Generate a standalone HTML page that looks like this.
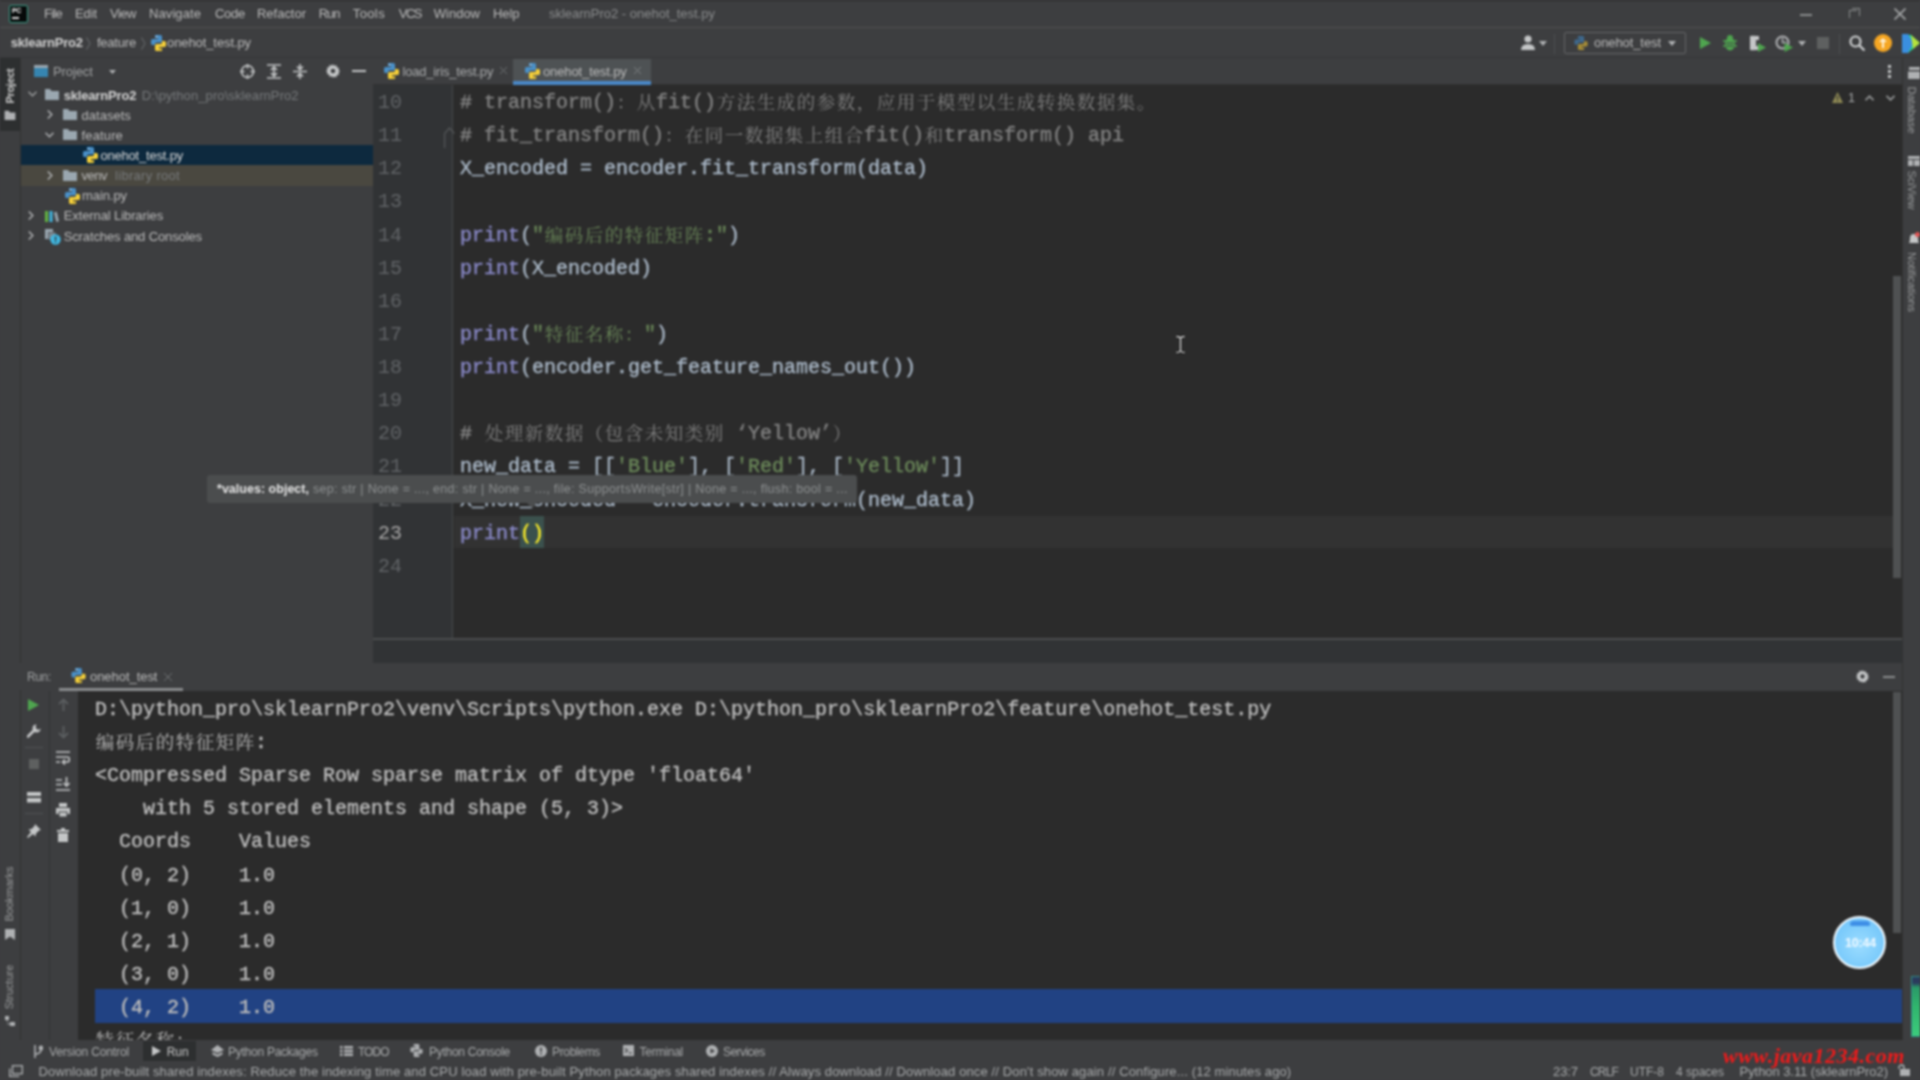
<!DOCTYPE html>
<html lang="zh">
<head>
<meta charset="utf-8">
<title>sklearnPro2 - onehot_test.py</title>
<style>
*{box-sizing:border-box;margin:0;padding:0}
html,body{width:1920px;height:1080px;overflow:hidden;background:#3d3e40}
body{filter:blur(.8px);position:relative;font-family:"Liberation Sans","Noto Sans CJK SC",sans-serif;font-size:13px;color:#bbbbbb}
.abs{position:absolute}
.t{position:absolute;white-space:pre;line-height:1;z-index:5}
.mono{font-family:"Liberation Mono","Noto Serif CJK SC",monospace;font-size:20px;-webkit-text-stroke:.4px currentColor}
.k{position:relative;top:1px;font-size:18.500px;letter-spacing:1.500px;margin-left:.7px;margin-right:-.7px;-webkit-text-stroke:0}
/* ---------- top ---------- */
#menubar{left:0;top:0;width:1920px;height:28px;background:#3d3e40;border-top:1px solid #2b2b2b;border-bottom:1px solid #515151}
#navbar{left:0;top:29px;width:1920px;height:29px;background:#3d3e40;border-bottom:1px solid #353638}
.menu{top:7px;font-size:13px;color:#bbbbbb}
.nav{top:36px;font-size:13px;color:#bbbbbb}
/* ---------- left ---------- */
#lstrip{left:0;top:58px;width:21px;height:982px;background:#3d3e40;border-right:1px solid #323232}
#proj{left:21px;top:58px;width:352px;height:600px;background:#3d3e40}
.tree{font-size:12.5px;color:#bbbbbb}
/* ---------- editor ---------- */
#tabs{left:373px;top:58px;width:1529px;height:27px;background:#3d3e40;border-bottom:1px solid #323232}
#editor{left:373px;top:85px;width:1529px;height:553px;background:#2b2b2b}
#gutter{left:373px;top:85px;width:80px;height:553px;background:#313335;border-right:1px solid #474a4b}
.ln{position:absolute;left:378px;width:40px;color:#606366;white-space:pre;line-height:1;-webkit-text-stroke:0 !important}
.code{position:absolute;left:460px;white-space:pre;line-height:1;color:#a9b7c6}
.c{color:#808080}.s{color:#6a8759}.b{color:#8888c6}
/* ---------- run ---------- */
#runhead{left:0;top:663px;width:1920px;height:27px;background:#3d3e40}
#console{left:78px;top:691px;width:1824px;height:349px;background:#2b2b2b;overflow:hidden}
.out{position:absolute;left:95px;white-space:pre;line-height:1;color:#bbbbbb}
/* ---------- bottom ---------- */
#toolbar{z-index:3;left:0;top:1040px;width:1920px;height:22px;background:#3d3e40}
#status{z-index:3;left:0;top:1062px;width:1920px;height:18px;background:#3d3e40}
#rstrip{left:1902px;top:58px;width:18px;height:982px;background:#3d3e40;border-left:1px solid #323232}
</style>
</head>
<body>
<div id="menubar" class="abs"></div>
<div id="navbar" class="abs"></div>
<div id="lstrip" class="abs"></div>
<div id="proj" class="abs"></div>
<div id="tabs" class="abs"></div>
<div id="editor" class="abs"></div>
<div id="gutter" class="abs"></div>
<div class="abs" style="left:454px;top:516px;width:1439px;height:32px;background:#323232"></div>
<div class="abs" style="left:520px;top:516px;width:24px;height:32px;background:#3b514d"></div>
<div id="runhead" class="abs"></div>
<div id="console" class="abs"></div>
<div id="toolbar" class="abs"></div>
<div id="status" class="abs"></div>
<div id="rstrip" class="abs"></div>
<!--MENU-->
<div class="t" style="left:44.0px;top:7.3px;font-size:13px;color:#bbbbbb;letter-spacing:-0.74px;">File</div>
<div class="t" style="left:75.0px;top:7.3px;font-size:13px;color:#bbbbbb;letter-spacing:-0.10px;">Edit</div>
<div class="t" style="left:110.0px;top:7.3px;font-size:13px;color:#bbbbbb;letter-spacing:-0.49px;">View</div>
<div class="t" style="left:149.0px;top:7.3px;font-size:13px;color:#bbbbbb;letter-spacing:0.09px;">Navigate</div>
<div class="t" style="left:215.0px;top:7.3px;font-size:13px;color:#bbbbbb;letter-spacing:-0.27px;">Code</div>
<div class="t" style="left:257.0px;top:7.3px;font-size:13px;color:#bbbbbb;letter-spacing:-0.02px;">Refactor</div>
<div class="t" style="left:318.7px;top:7.3px;font-size:13px;color:#bbbbbb;letter-spacing:-0.99px;">Run</div>
<div class="t" style="left:352.8px;top:7.3px;font-size:13px;color:#bbbbbb;letter-spacing:0.37px;">Tools</div>
<div class="t" style="left:398.8px;top:7.3px;font-size:13px;color:#bbbbbb;letter-spacing:-1.51px;">VCS</div>
<div class="t" style="left:433.8px;top:7.3px;font-size:13px;color:#bbbbbb;letter-spacing:-0.01px;">Window</div>
<div class="t" style="left:493.0px;top:7.3px;font-size:13px;color:#bbbbbb;letter-spacing:-0.09px;">Help</div>
<div class="t" style="left:549.0px;top:7.3px;font-size:13px;color:#8a8c8d;letter-spacing:-0.01px;">sklearnPro2 - onehot_test.py</div>
<div class="t" style="left:10.8px;top:36.4px;font-size:13px;color:#d0d0d0;letter-spacing:-0.23px;font-weight:bold">sklearnPro2</div>
<div class="t" style="left:96.9px;top:36.4px;font-size:13px;color:#bbbbbb;letter-spacing:-0.20px;">feature</div>
<div class="t" style="left:167.0px;top:36.4px;font-size:13px;color:#bbbbbb;letter-spacing:-0.09px;">onehot_test.py</div>
<div class="t" style="left:1594.0px;top:36.4px;font-size:13px;color:#bbbbbb;letter-spacing:-0.09px;">onehot_test</div>
<div class="t" style="left:53.0px;top:65.0px;font-size:13px;color:#a0a2a3;letter-spacing:-0.11px;">Project</div>
<div class="t" style="left:63.7px;top:88.6px;font-size:13px;color:#d4d4d4;letter-spacing:-0.17px;font-weight:bold">sklearnPro2</div>
<div class="t" style="left:141.8px;top:88.6px;font-size:13px;color:#777a7c;letter-spacing:0.09px;">D:\python_pro\sklearnPro2</div>
<div class="t" style="left:81.6px;top:108.6px;font-size:13px;color:#bbbbbb;letter-spacing:0.01px;">datasets</div>
<div class="t" style="left:81.6px;top:128.8px;font-size:13px;color:#bbbbbb;letter-spacing:0.13px;">feature</div>
<div class="t" style="left:100.4px;top:149.0px;font-size:13px;color:#d8d8d8;letter-spacing:-0.19px;">onehot_test.py</div>
<div class="t" style="left:81.6px;top:169.2px;font-size:13px;color:#bbbbbb;letter-spacing:-0.52px;">venv</div>
<div class="t" style="left:115.0px;top:169.2px;font-size:13px;color:#777a7c;letter-spacing:0.30px;">library root</div>
<div class="t" style="left:82.0px;top:189.3px;font-size:13px;color:#bbbbbb;letter-spacing:-0.08px;">main.py</div>
<div class="t" style="left:63.7px;top:209.4px;font-size:13px;color:#bbbbbb;letter-spacing:-0.10px;">External Libraries</div>
<div class="t" style="left:63.7px;top:229.5px;font-size:13px;color:#bbbbbb;letter-spacing:-0.12px;">Scratches and Consoles</div>
<div class="t" style="left:402.5px;top:65.0px;font-size:13px;color:#a9abac;letter-spacing:-0.19px;">load_iris_test.py</div>
<div class="t" style="left:543.0px;top:65.0px;font-size:13px;color:#bbbbbb;letter-spacing:-0.11px;">onehot_test.py</div>
<div class="t" style="left:26.9px;top:670.8px;font-size:12px;color:#a0a2a3;letter-spacing:-0.31px;">Run:</div>
<div class="t" style="left:90.0px;top:670.0px;font-size:13px;color:#bbbbbb;letter-spacing:-0.05px;">onehot_test</div>
<div class="t" style="left:49.0px;top:1046.3px;font-size:12px;color:#a9abac;letter-spacing:-0.14px;">Version Control</div>
<div class="t" style="left:166.7px;top:1046.3px;font-size:12px;color:#c8c8c8;letter-spacing:-0.07px;">Run</div>
<div class="t" style="left:228.0px;top:1046.3px;font-size:12px;color:#a9abac;letter-spacing:-0.25px;">Python Packages</div>
<div class="t" style="left:358.0px;top:1046.3px;font-size:12px;color:#a9abac;letter-spacing:-0.99px;">TODO</div>
<div class="t" style="left:429.0px;top:1046.3px;font-size:12px;color:#a9abac;letter-spacing:-0.27px;">Python Console</div>
<div class="t" style="left:552.0px;top:1046.3px;font-size:12px;color:#a9abac;letter-spacing:-0.34px;">Problems</div>
<div class="t" style="left:639.6px;top:1046.3px;font-size:12px;color:#a9abac;letter-spacing:-0.24px;">Terminal</div>
<div class="t" style="left:723.0px;top:1046.3px;font-size:12px;color:#a9abac;letter-spacing:-0.55px;">Services</div>
<div class="t" style="left:38.5px;top:1065.0px;font-size:13px;color:#a9abac;letter-spacing:0.13px;">Download pre-built shared indexes: Reduce the indexing time and CPU load with pre-built Python packages shared indexes // Always download // Download once // Don&#x27;t show again // Configure... (12 minutes ago)</div>
<div class="t" style="left:1553.0px;top:1065.0px;font-size:13px;color:#a9abac;letter-spacing:-0.08px;">23:7</div>
<div class="t" style="left:1590.0px;top:1065.8px;font-size:12px;color:#a9abac;letter-spacing:-0.84px;">CRLF</div>
<div class="t" style="left:1630.0px;top:1065.8px;font-size:12px;color:#a9abac;letter-spacing:0.00px;">UTF-8</div>
<div class="t" style="left:1676.0px;top:1065.8px;font-size:12px;color:#a9abac;letter-spacing:-0.00px;">4 spaces</div>
<div class="t" style="left:1739.6px;top:1065.0px;font-size:13px;color:#a9abac;letter-spacing:-0.07px;">Python 3.11 (sklearnPro2)</div>
<div class="t" style="left:1723.0px;top:1045.1px;font-size:22px;color:#f01a1a;letter-spacing:0.50px;font-family:'Liberation Serif',serif;font-weight:bold;font-style:italic;z-index:6">www.java1234.com</div>
<div class="t" style="left:217.0px;top:482.8px;font-size:12.5px;color:#e6e6e6;letter-spacing:0.02px;font-weight:bold;z-index:21">*values: object,</div>
<div class="t" style="left:313.0px;top:482.8px;font-size:12.5px;color:#8e9192;letter-spacing:0.32px;z-index:21">sep: str | None = ..., end: str | None = ..., file: SupportsWrite[str] | None = ..., flush: bool = ...</div>
<div class="t" style="left:1848.0px;top:91.9px;font-size:12.5px;color:#a9abac;letter-spacing:-1.95px;">1</div>
<div class="t" style="left:1845.0px;top:936.9px;font-size:12.5px;color:#f2faff;letter-spacing:-0.20px;z-index:31;font-weight:bold">10:44</div>
<!--/MENU-->
<!--NAV-->
<!-- app logo -->
<div class="abs" style="left:9px;top:5px;width:19px;height:18px;background:#070a0a;border:1.500px solid #3fa08a;border-radius:2px"></div>
<div class="t" style="left:12px;top:7px;font-size:7px;font-weight:bold;color:#ffffff;letter-spacing:-.3px">PC</div>
<div class="abs" style="left:12px;top:17px;width:7px;height:1.500px;background:#dddddd"></div>
<!-- window controls -->
<div class="abs" style="left:1800px;top:14px;width:12px;height:1.500px;background:#8b8d8e"></div>
<div class="abs" style="left:1849px;top:10px;width:8px;height:8px;border:1.500px solid #8b8d8e;border-bottom:none;border-right:none"></div>
<div class="abs" style="left:1852px;top:8px;width:8px;height:8px;border:1.500px solid #8b8d8e;border-left:none;border-bottom:none"></div>
<svg class="abs" style="left:1894px;top:8px" width="12" height="12" viewBox="0 0 12 12" stroke="#a4a6a7" stroke-width="1.600"><path d="M.5.500l11 11M11.500.500l-11 11"/></svg>
<!-- breadcrumb chevrons -->
<svg class="abs" style="left:86px;top:37px" width="5" height="13" viewBox="0 0 5 13" fill="none" stroke="#6e7173" stroke-width="1"><path d="M.5.500l3.500 6-3.500 6"/></svg>
<svg class="abs" style="left:141px;top:37px" width="5" height="13" viewBox="0 0 5 13" fill="none" stroke="#6e7173" stroke-width="1"><path d="M.5.500l3.500 6-3.500 6"/></svg>
<svg class="abs" style="left:151px;top:35px" width="15" height="16" viewBox="0 0 15 16"><path d="M4 0h5.500q1.500 0 1.500 1.500V6q0 1.500-1.500 1.500H5.500Q4 7.500 4 9v1H1.500Q0 10 0 8.500V5.500Q0 4 1.500 4H7V3H4z" fill="#4a90c8"/><circle cx="5.600" cy="1.700" r=".8" fill="#dfe9f2"/><path d="M11 16H5.500Q4 16 4 14.500V10.500Q4 9 5.500 9H9.500Q11 9 11 7.500V6h2.500Q15 6 15 7.500v3Q15 12 13.500 12H8v1h3z" fill="#f4cf3a"/><circle cx="9.400" cy="14.300" r=".8" fill="#7a6a1d"/></svg>
<!-- user icon -->
<svg class="abs" style="left:1520px;top:35px" width="16" height="15" viewBox="0 0 16 15"><circle cx="8" cy="4" r="3.600" fill="#c4c6c7"/><path d="M1 15q0-6 7-6t7 6z" fill="#c4c6c7"/></svg>
<svg class="abs" style="left:1539px;top:41px" width="8" height="5" viewBox="0 0 8 5"><path d="M0 0h8L4 5z" fill="#afb1b3"/></svg>
<div class="abs" style="left:1554px;top:34px;width:1px;height:20px;background:#4d5052"></div>
<!-- run config -->
<div class="abs" style="left:1564px;top:32px;width:122px;height:22px;border:1px solid #646668;border-radius:2px"></div>
<svg class="abs" style="left:1574px;top:36px" width="14" height="14" viewBox="0 0 15 16" opacity=".75"><path d="M4 0h5.500q1.500 0 1.500 1.500V6q0 1.500-1.500 1.500H5.500Q4 7.500 4 9v1H1.500Q0 10 0 8.500V5.500Q0 4 1.500 4H7V3H4z" fill="#3f78a8"/><path d="M11 16H5.500Q4 16 4 14.500V10.500Q4 9 5.500 9H9.500Q11 9 11 7.500V6h2.500Q15 6 15 7.500v3Q15 12 13.500 12H8v1h3z" fill="#c9a834"/></svg>
<svg class="abs" style="left:1668px;top:41px" width="8" height="5" viewBox="0 0 8 5"><path d="M0 0h8L4 5z" fill="#afb1b3"/></svg>
<!-- run -->
<svg class="abs" style="left:1700px;top:37px" width="11" height="12" viewBox="0 0 11 12"><path d="M0 0l11 6-11 6z" fill="#4fa54f"/></svg>
<!-- debug -->
<svg class="abs" style="left:1723px;top:35px" width="14" height="16" viewBox="0 0 14 16"><ellipse cx="7" cy="9" rx="5" ry="6.500" fill="#4fa54f"/><circle cx="7" cy="3" r="3" fill="#4fa54f"/><path d="M0 6h14M0 11h14" stroke="#4fa54f" stroke-width="1.500"/><path d="M3 8h8M3 11h8" stroke="#3d3e40" stroke-width="1.200"/></svg>
<!-- coverage -->
<svg class="abs" style="left:1749px;top:35px" width="17" height="17" viewBox="0 0 17 17"><path d="M1 1h9v4H7v6h3v4H1z" fill="#c4c6c7" /><path d="M1 1q6-1 9 1v3H6v6h4v3q-3 2-9 1z" fill="#c4c6c7"/><path d="M9 8l8 4.500-8 4.500z" fill="#4fa54f"/></svg>
<!-- profile -->
<svg class="abs" style="left:1775px;top:35px" width="18" height="17" viewBox="0 0 18 17"><circle cx="7.500" cy="7.500" r="6" fill="none" stroke="#afb1b3" stroke-width="2"/><path d="M7.500 3v4.500h4" stroke="#afb1b3" stroke-width="1.500" fill="none"/><path d="M9.500 8l8.500 4.500-8.500 4.500z" fill="#4fa54f"/></svg>
<svg class="abs" style="left:1798px;top:41px" width="8" height="5" viewBox="0 0 8 5"><path d="M0 0h8L4 5z" fill="#afb1b3"/></svg>
<!-- stop -->
<div class="abs" style="left:1817px;top:37px;width:12px;height:12px;background:#5e6060"></div>
<div class="abs" style="left:1839px;top:34px;width:1px;height:20px;background:#4d5052"></div>
<!-- search -->
<svg class="abs" style="left:1849px;top:35px" width="16" height="16" viewBox="0 0 16 16" fill="none" stroke="#d0d2d3" stroke-width="2.200"><circle cx="6.500" cy="6.500" r="5"/><path d="M10.500 10.500l5 5"/></svg>
<!-- orange circle -->
<div class="abs" style="left:1874px;top:34px;width:18px;height:18px;border-radius:9px;background:#f5a623"></div>
<svg class="abs" style="left:1879px;top:38px" width="8" height="10" viewBox="0 0 8 10"><path d="M4 0l4 4H5v6H3V4H0z" fill="#fff2d8"/></svg>
<!-- colourful logo -->
<svg class="abs" style="left:1901px;top:33px" width="19" height="20" viewBox="0 0 19 20"><path d="M1 1l9 1 9 8-12 10H1z" fill="#21d789"/><path d="M1 1l6 0 6 9-6 10H1z" fill="#3a8fe0"/><path d="M10 2l9 8-7 6z" fill="#b6e33c"/></svg>
<!--/NAV-->
<!--PROJECT-->
<!-- left strip selected "Project" button -->
<div class="abs" style="left:0;top:58px;width:20px;height:73px;background:#2d2f30"></div>
<div class="t" style="left:-14.5px;top:79.500px;width:50px;height:12px;font-size:11px;color:#d0d0d0;font-weight:bold;letter-spacing:-.35px;transform:rotate(-90deg);text-align:center">Project</div>
<svg class="abs" style="left:4px;top:110px" width="12" height="10" viewBox="0 0 13 12"><path d="M0 1h5l1.5 2H13v9H0z" fill="#afb1b3"/></svg>
<div class="t" style="left:-22px;top:888px;width:64px;height:12px;font-size:11px;color:#9a9c9d;transform:rotate(-90deg);text-align:center">Bookmarks</div>
<svg class="abs" style="left:5px;top:929px" width="10" height="11" viewBox="0 0 10 11"><path d="M0 0h10v11L5 7.5 0 11z" fill="#afb1b3"/></svg>
<div class="t" style="left:-17px;top:981px;width:54px;height:12px;font-size:11px;color:#9a9c9d;transform:rotate(-90deg);text-align:center">Structure</div>
<svg class="abs" style="left:5px;top:1016px" width="10" height="10" viewBox="0 0 10 10"><path d="M0 0h4v4H0zM5 6h5v4H5zM1.5 4h1v4.5H5v-1H2.5z" fill="#afb1b3"/></svg>
<!-- project header -->
<svg class="abs" style="left:34px;top:65px" width="14" height="12" viewBox="0 0 14 12"><rect x="0" y="0" width="14" height="12" fill="#3592c4" opacity=".85"/><rect x="0" y="0" width="14" height="3" fill="#9aa7b0"/></svg>
<svg class="abs" style="left:109px;top:70px" width="7" height="4" viewBox="0 0 7 4"><path d="M0 0h7L3.5 4z" fill="#afb1b3"/></svg>
<svg class="abs" style="left:240px;top:64px" width="15" height="15" viewBox="0 0 15 15" fill="none" stroke="#c4c6c7" stroke-width="1.6"><circle cx="7.5" cy="7.5" r="6"/><path d="M7.5 0v4.5M7.5 10.5V15M0 7.5h4.5M10.5 7.5H15"/></svg>
<svg class="abs" style="left:267px;top:64px" width="14" height="15" viewBox="0 0 14 15" fill="none" stroke="#c4c6c7" stroke-width="1.7"><path d="M0 1h14M0 14h14M7 3.5v8M4 6l3-3 3 3M4 9l3 3 3-3"/></svg>
<svg class="abs" style="left:293px;top:64px" width="14" height="15" viewBox="0 0 14 15" fill="none" stroke="#c4c6c7" stroke-width="1.7"><path d="M0 7.5h14M7 0v5M4 2.5l3 3 3-3M7 15v-5M4 12.5l3-3 3 3"/></svg>
<svg class="abs" style="left:326px;top:64px" width="14" height="14" viewBox="0 0 14 14"><path d="M7 0l1.2 2 2.2-.9.4 2.4 2.4.4-.9 2.2 2 1.2-2 1.2.9 2.2-2.4.4-.4 2.4-2.2-.9L7 14l-1.200-2-2.200.9-.4-2.400-2.400-.4.900-2.200L-.3 7l2-1.200-.9-2.200 2.400-.4.400-2.400 2.200.9z" fill="#c4c6c7"/><circle cx="7" cy="7" r="2.300" fill="#3d3e40"/></svg>
<div class="abs" style="left:352px;top:70px;width:14px;height:2px;background:#c4c6c7"></div>
<!-- tree rows bg -->
<div class="abs" style="left:21px;top:145px;width:352px;height:20px;background:#0d293e"></div>
<div class="abs" style="left:21px;top:165px;width:352px;height:21px;background:#4a4840"></div>
<!-- chevrons -->
<svg class="abs" style="left:28px;top:91px" width="9" height="6" viewBox="0 0 9 6" fill="none" stroke="#9a9c9d" stroke-width="1.5"><path d="M.5.800l4 4 4-4"/></svg>
<svg class="abs" style="left:47px;top:110px" width="6" height="9" viewBox="0 0 6 9" fill="none" stroke="#afb1b3" stroke-width="1.5"><path d="M.8.500l4 4-4 4"/></svg>
<svg class="abs" style="left:45px;top:132px" width="9" height="6" viewBox="0 0 9 6" fill="none" stroke="#afb1b3" stroke-width="1.500"><path d="M.5.800l4 4 4-4"/></svg>
<svg class="abs" style="left:47px;top:171px" width="6" height="9" viewBox="0 0 6 9" fill="none" stroke="#afb1b3" stroke-width="1.5"><path d="M.8.500l4 4-4 4"/></svg>
<svg class="abs" style="left:28px;top:211px" width="6" height="9" viewBox="0 0 6 9" fill="none" stroke="#afb1b3" stroke-width="1.5"><path d="M.8.500l4 4-4 4"/></svg>
<svg class="abs" style="left:28px;top:231px" width="6" height="9" viewBox="0 0 6 9" fill="none" stroke="#afb1b3" stroke-width="1.5"><path d="M.8.500l4 4-4 4"/></svg>
<!-- folders -->
<svg class="abs" style="left:45px;top:89px" width="14" height="11" viewBox="0 0 14 11"><path d="M0 0h5l1.500 2H14v9H0z" fill="#9aa7b0"/></svg>
<svg class="abs" style="left:63px;top:109px" width="14" height="11" viewBox="0 0 14 11"><path d="M0 0h5l1.500 2H14v9H0z" fill="#9aa7b0"/></svg>
<svg class="abs" style="left:63px;top:129px" width="14" height="11" viewBox="0 0 14 11"><path d="M0 0h5l1.500 2H14v9H0z" fill="#9aa7b0"/></svg>
<svg class="abs" style="left:63px;top:170px" width="14" height="11" viewBox="0 0 14 11"><path d="M0 0h5l1.500 2H14v9H0z" fill="#9aa7b0"/></svg>
<!-- python file icons -->
<svg class="abs" style="left:83px;top:147px" width="15" height="16" viewBox="0 0 15 16"><path d="M4 0h5.500q1.500 0 1.500 1.500V6q0 1.500-1.500 1.500H5.500Q4 7.500 4 9v1H1.500Q0 10 0 8.500V5.500Q0 4 1.500 4H7V3H4z" fill="#4a90c8"/><circle cx="5.600" cy="1.700" r=".8" fill="#dfe9f2"/><path d="M11 16H5.500Q4 16 4 14.500V10.500Q4 9 5.500 9H9.500Q11 9 11 7.500V6h2.500Q15 6 15 7.500v3Q15 12 13.500 12H8v1h3z" fill="#f4cf3a"/><circle cx="9.400" cy="14.300" r=".8" fill="#7a6a1d"/></svg>
<svg class="abs" style="left:65px;top:188px" width="15" height="16" viewBox="0 0 15 16"><path d="M4 0h5.500q1.500 0 1.500 1.500V6q0 1.500-1.500 1.500H5.500Q4 7.500 4 9v1H1.500Q0 10 0 8.500V5.500Q0 4 1.500 4H7V3H4z" fill="#4a90c8"/><circle cx="5.600" cy="1.700" r=".8" fill="#dfe9f2"/><path d="M11 16H5.500Q4 16 4 14.500V10.500Q4 9 5.500 9H9.500Q11 9 11 7.500V6h2.500Q15 6 15 7.500v3Q15 12 13.500 12H8v1h3z" fill="#f4cf3a"/><circle cx="9.400" cy="14.300" r=".8" fill="#7a6a1d"/></svg>
<!-- external libs icon -->
<svg class="abs" style="left:45px;top:210px" width="14" height="12" viewBox="0 0 14 12"><rect x="0" y="1" width="3" height="11" fill="#62b543"/><rect x="4.5" y="1" width="3" height="11" fill="#40b6e0"/><path d="M9 2.500l2.700-.8 2.300 9.500-2.700.8z" fill="#9aa7b0"/></svg>
<!-- scratches icon -->
<svg class="abs" style="left:45px;top:229px" width="16" height="16" viewBox="0 0 16 16"><path d="M0 0h8v3h-5v7H0z" fill="#9aa7b0"/><rect x="3.500" y="3.500" width="7" height="7" fill="#9aa7b0" opacity=".7"/><circle cx="10.500" cy="10.500" r="5.200" fill="#40b6e0"/><rect x="9.900" y="7.500" width="1.300" height="4" fill="#2b2b2b"/><rect x="9.900" y="12.300" width="1.300" height="1.300" fill="#2b2b2b"/></svg>
<!--/PROJECT-->
<!--TABS-->
<!-- active tab -->
<div class="abs" style="left:513px;top:59px;width:138px;height:26px;background:#4e5254"></div>
<div class="abs" style="left:513px;top:81px;width:138px;height:4px;background:#4a88c7"></div>
<svg class="abs" style="left:384px;top:63px" width="15" height="16" viewBox="0 0 15 16"><path d="M4 0h5.500q1.500 0 1.500 1.500V6q0 1.500-1.500 1.500H5.500Q4 7.500 4 9v1H1.500Q0 10 0 8.500V5.500Q0 4 1.500 4H7V3H4z" fill="#4a90c8"/><circle cx="5.600" cy="1.700" r=".8" fill="#dfe9f2"/><path d="M11 16H5.500Q4 16 4 14.500V10.500Q4 9 5.500 9H9.500Q11 9 11 7.500V6h2.500Q15 6 15 7.500v3Q15 12 13.500 12H8v1h3z" fill="#f4cf3a"/><circle cx="9.400" cy="14.300" r=".8" fill="#7a6a1d"/></svg>
<svg class="abs" style="left:525px;top:63px" width="15" height="16" viewBox="0 0 15 16"><path d="M4 0h5.500q1.500 0 1.500 1.500V6q0 1.500-1.500 1.500H5.500Q4 7.500 4 9v1H1.500Q0 10 0 8.500V5.500Q0 4 1.500 4H7V3H4z" fill="#4a90c8"/><circle cx="5.600" cy="1.700" r=".8" fill="#dfe9f2"/><path d="M11 16H5.500Q4 16 4 14.500V10.500Q4 9 5.500 9H9.500Q11 9 11 7.500V6h2.500Q15 6 15 7.500v3Q15 12 13.500 12H8v1h3z" fill="#f4cf3a"/><circle cx="9.400" cy="14.300" r=".8" fill="#7a6a1d"/></svg>
<svg class="abs" style="left:500px;top:67px" width="7" height="7" viewBox="0 0 7 7" stroke="#6e7173" stroke-width="1"><path d="M0 0l7 7M7 0L0 7"/></svg>
<svg class="abs" style="left:634px;top:67px" width="7" height="7" viewBox="0 0 7 7" stroke="#7e8183" stroke-width="1"><path d="M0 0l7 7M7 0L0 7"/></svg>
<!-- kebab -->
<div class="abs" style="left:1888px;top:65px;width:3px;height:3px;background:#c4c6c7;box-shadow:0 5px 0 #c4c6c7,0 10px 0 #c4c6c7"></div>
<!-- right strip -->
<svg class="abs" style="left:1908px;top:67px" width="12" height="12" viewBox="0 0 12 12"><rect x="1" y="0" width="11" height="3" fill="#afb1b3"/><rect x="0" y="4.500" width="12" height="7.500" fill="#afb1b3"/></svg>
<div class="t" style="left:1886px;top:104px;width:50px;height:12px;font-size:11px;color:#9a9c9d;transform:rotate(90deg);text-align:center">Database</div>
<svg class="abs" style="left:1908px;top:156px" width="12" height="10" viewBox="0 0 12 10"><rect x="0" y="0" width="12" height="3" fill="#afb1b3"/><rect x="0" y="4" width="5" height="6" fill="#afb1b3"/><rect x="6" y="4" width="6" height="6" fill="#afb1b3"/></svg>
<div class="t" style="left:1890px;top:184px;width:42px;height:12px;font-size:11px;color:#9a9c9d;transform:rotate(90deg);text-align:center">SciView</div>
<svg class="abs" style="left:1908px;top:232px" width="12" height="13" viewBox="0 0 12 13"><path d="M1 11q1-1 1-5 0-4 4-4t4 4q0 4 1 5z" fill="#c4c6c7"/><circle cx="9.500" cy="2.500" r="2.500" fill="#e05555"/></svg>
<div class="t" style="left:1876px;top:276px;width:70px;height:12px;font-size:11px;color:#9a9c9d;transform:rotate(90deg);text-align:center">Notifications</div>
<!--/TABS-->
<!--CODE-->
<div class="ln mono" style="top:93.0px">10</div>
<div class="code mono" style="top:93.0px"><span class="c"># transform()<span class="k">：从</span>fit()<span class="k">方法生成的参数，应用于模型以生成转换数据集。</span></span></div>
<div class="ln mono" style="top:126.1px">11</div>
<div class="code mono" style="top:126.1px"><span class="c"># fit_transform()<span class="k">：在同一数据集上组合</span>fit()<span class="k">和</span>transform() api</span></div>
<div class="ln mono" style="top:159.3px">12</div>
<div class="code mono" style="top:159.3px">X_encoded = encoder.fit_transform(data)</div>
<div class="ln mono" style="top:192.4px">13</div>
<div class="ln mono" style="top:225.5px">14</div>
<div class="code mono" style="top:225.5px"><span class="b">print</span>(<span class="s">"<span class="k">编码后的特征矩阵</span>:"</span>)</div>
<div class="ln mono" style="top:258.6px">15</div>
<div class="code mono" style="top:258.6px"><span class="b">print</span>(X_encoded)</div>
<div class="ln mono" style="top:291.8px">16</div>
<div class="ln mono" style="top:324.9px">17</div>
<div class="code mono" style="top:324.9px"><span class="b">print</span>(<span class="s">"<span class="k">特征名称：</span>"</span>)</div>
<div class="ln mono" style="top:358.0px">18</div>
<div class="code mono" style="top:358.0px"><span class="b">print</span>(encoder.get_feature_names_out())</div>
<div class="ln mono" style="top:391.2px">19</div>
<div class="ln mono" style="top:424.3px">20</div>
<div class="code mono" style="top:424.3px"><span class="c"># <span class="k">处理新数据（包含未知类别</span> ‘Yellow’<span class="k">）</span></span></div>
<div class="ln mono" style="top:457.4px">21</div>
<div class="code mono" style="top:457.4px">new_data = [[<span class="s">'Blue'</span>], [<span class="s">'Red'</span>], [<span class="s">'Yellow'</span>]]</div>
<div class="ln mono" style="top:490.6px">22</div>
<div class="code mono" style="top:490.6px">X_new_encoded = encoder.transform(new_data)</div>
<div class="ln mono" style="top:523.7px;color:#a4a3a3">23</div>
<div class="code mono" style="top:523.7px"><span class="b">print</span><span style="color:#ffef28">()</span></div>
<div class="ln mono" style="top:556.8px">24</div>
<!--/CODE-->
<!--RUN-->
<div class="abs" style="left:95px;top:989px;width:1807px;height:34px;background:#214283"></div>
<div class="out mono" style="top:700.0px">D:\python_pro\sklearnPro2\venv\Scripts\python.exe D:\python_pro\sklearnPro2\feature\onehot_test.py</div>
<div class="out mono" style="top:733.1px"><span class="k">编码后的特征矩阵</span>:</div>
<div class="out mono" style="top:766.2px">&lt;Compressed Sparse Row sparse matrix of dtype 'float64'</div>
<div class="out mono" style="top:799.3px">    with 5 stored elements and shape (5, 3)&gt;</div>
<div class="out mono" style="top:832.4px">  Coords    Values</div>
<div class="out mono" style="top:865.5px">  (0, 2)    1.0</div>
<div class="out mono" style="top:898.6px">  (1, 0)    1.0</div>
<div class="out mono" style="top:931.7px">  (2, 1)    1.0</div>
<div class="out mono" style="top:964.8px">  (3, 0)    1.0</div>
<div class="out mono" style="top:997.9px">  (4, 2)    1.0</div>
<div class="out mono" style="top:1031.0px"><span class="k">特征名称：</span></div>
<!--/RUN-->
<!--BOTTOM-->
<!-- run tab -->
<svg class="abs" style="left:71px;top:668px" width="15" height="15" viewBox="0 0 15 16"><path d="M4 0h5.500q1.500 0 1.500 1.500V6q0 1.500-1.500 1.500H5.500Q4 7.500 4 9v1H1.500Q0 10 0 8.500V5.500Q0 4 1.500 4H7V3H4z" fill="#4a90c8"/><circle cx="5.600" cy="1.700" r=".8" fill="#dfe9f2"/><path d="M11 16H5.500Q4 16 4 14.500V10.500Q4 9 5.500 9H9.500Q11 9 11 7.500V6h2.500Q15 6 15 7.500v3Q15 12 13.500 12H8v1h3z" fill="#f4cf3a"/><circle cx="9.400" cy="14.300" r=".8" fill="#7a6a1d"/></svg>
<svg class="abs" style="left:164px;top:673px" width="8" height="8" viewBox="0 0 8 8" stroke="#6e7173" stroke-width="1"><path d="M0 0l8 8M8 0L0 8"/></svg>
<div class="abs" style="left:59px;top:688px;width:124px;height:3px;background:#8a8c8e"></div>
<!-- gear / minus -->
<svg class="abs" style="left:1856px;top:670px" width="13" height="13" viewBox="0 0 14 14"><path d="M7 0l1.200 2 2.200-.9.400 2.400 2.400.4-.9 2.200 2 1.200-2 1.200.9 2.200-2.400.4-.4 2.400-2.200-.9L7 14l-1.200-2-2.200.9-.4-2.400-2.400-.4.900-2.200L-.3 7l2-1.200-.9-2.200 2.400-.4.400-2.400 2.200.9z" fill="#c4c6c7"/><circle cx="7" cy="7" r="2.300" fill="#3d3e40"/></svg>
<div class="abs" style="left:1883px;top:676px;width:12px;height:2px;background:#8b8d8e"></div>
<!-- left toolbar col 1 -->
<svg class="abs" style="left:28px;top:699px" width="11" height="12" viewBox="0 0 11 12"><path d="M0 0l11 6-11 6z" fill="#4fa54f"/></svg>
<svg class="abs" style="left:27px;top:724px" width="14" height="14" viewBox="0 0 14 14"><path d="M1 12.500l6.500-6.500" stroke="#c4c6c7" stroke-width="2.600" fill="none" stroke-linecap="round"/><path d="M9.500 0.500a4 4 0 1 0 4 4l-2.500 1.500-2.500-2.500z" fill="#c4c6c7"/></svg>
<div class="abs" style="left:25px;top:747px;width:18px;height:1px;background:#515456"></div>
<div class="abs" style="left:29px;top:759px;width:10px;height:10px;background:#5e6060"></div>
<svg class="abs" style="left:27px;top:792px" width="14" height="11" viewBox="0 0 14 11"><rect x="0" y="0" width="14" height="4" fill="#c4c6c7"/><rect x="0" y="6" width="14" height="4.500" fill="#c4c6c7"/></svg>
<div class="abs" style="left:25px;top:813px;width:18px;height:1px;background:#515456"></div>
<svg class="abs" style="left:27px;top:824px" width="14" height="14" viewBox="0 0 14 14"><path d="M8 0l6 6-2 .5-3 3-.5 3-2.500-2.500L1 14l-1-1 4-5L1.500 5.500l3-.5 3-3z" fill="#c4c6c7"/></svg>
<div class="abs" style="left:49px;top:691px;width:1px;height:349px;background:#323435"></div>
<!-- col 2 -->
<svg class="abs" style="left:58px;top:698px" width="11" height="13" viewBox="0 0 11 13" fill="none" stroke="#5c5f61" stroke-width="1.800"><path d="M5.500 13V2M1 6l4.500-4.500L10 6"/></svg>
<svg class="abs" style="left:58px;top:726px" width="11" height="13" viewBox="0 0 11 13" fill="none" stroke="#5c5f61" stroke-width="1.800"><path d="M5.500 0v11M1 7l4.500 4.500L10 7"/></svg>
<svg class="abs" style="left:56px;top:751px" width="14" height="14" viewBox="0 0 14 14" fill="none" stroke="#c4c6c7" stroke-width="1.700"><path d="M0 1h14M0 6h11q2.500 0 2.500 2.500T11 11H7M0 11h4M9 8.500L6.500 11 9 13.500"/></svg>
<svg class="abs" style="left:56px;top:777px" width="14" height="14" viewBox="0 0 14 14" fill="none" stroke="#c4c6c7" stroke-width="1.700"><path d="M0 3h6M0 7.500h6M0 13h14M10.500 0v9M7.500 6l3 3 3-3"/></svg>
<svg class="abs" style="left:56px;top:803px" width="14" height="14" viewBox="0 0 14 14"><rect x="3" y="0" width="8" height="4" fill="#c4c6c7"/><rect x="0" y="5" width="14" height="6" fill="#c4c6c7"/><rect x="3" y="9" width="8" height="5" fill="#c4c6c7" stroke="#3d3e40" stroke-width="1"/></svg>
<svg class="abs" style="left:57px;top:828px" width="12" height="14" viewBox="0 0 12 14"><path d="M4 0h4v2h4v2H0V2h4zM1 5h10v9H1z" fill="#c4c6c7"/></svg>
<div class="abs" style="left:0;top:0;z-index:4">
<!-- tool window buttons -->
<div class="abs" style="left:143px;top:1041px;width:53px;height:20px;background:#2d2f30"></div>
<svg class="abs" style="left:33px;top:1045px" width="10" height="13" viewBox="0 0 10 13" fill="none" stroke="#afb1b3" stroke-width="1.600"><path d="M2 0v13M2 9q6 0 6-5"/><circle cx="8" cy="3" r="1.600" fill="#afb1b3"/></svg>
<svg class="abs" style="left:152px;top:1046px" width="9" height="10" viewBox="0 0 9 10"><path d="M0 0l9 5-9 5z" fill="#c4c6c7"/></svg>
<svg class="abs" style="left:211px;top:1045px" width="13" height="12" viewBox="0 0 13 12"><path d="M0 5l6.500-5L13 5l-6.500 3z" fill="#afb1b3"/><path d="M1.500 7l5 2.500 5-2.500v2.500l-5 2.500-5-2.500z" fill="#afb1b3"/></svg>
<svg class="abs" style="left:340px;top:1046px" width="13" height="10" viewBox="0 0 13 10" fill="#afb1b3"><rect x="0" y="0" width="2.500" height="2.500"/><rect x="4" y="0" width="9" height="2.500"/><rect x="0" y="3.800" width="2.500" height="2.500"/><rect x="4" y="3.800" width="9" height="2.500"/><rect x="0" y="7.500" width="2.500" height="2.500"/><rect x="4" y="7.500" width="9" height="2.500"/></svg>
<svg class="abs" style="left:410px;top:1044px" width="13" height="13" viewBox="0 0 15 16"><path d="M4 0h5.500q1.500 0 1.500 1.500V6q0 1.500-1.500 1.500H5.500Q4 7.500 4 9v1H1.500Q0 10 0 8.500V5.500Q0 4 1.500 4H7V3H4z" fill="#afb1b3"/><path d="M11 16H5.500Q4 16 4 14.500V10.500Q4 9 5.500 9H9.500Q11 9 11 7.500V6h2.500Q15 6 15 7.500v3Q15 12 13.500 12H8v1h3z" fill="#afb1b3"/></svg>
<svg class="abs" style="left:535px;top:1045px" width="12" height="12" viewBox="0 0 12 12"><circle cx="6" cy="6" r="6" fill="#afb1b3"/><rect x="5.200" y="2.500" width="1.600" height="4.500" fill="#3d3e40"/><rect x="5.200" y="8" width="1.600" height="1.600" fill="#3d3e40"/></svg>
<svg class="abs" style="left:623px;top:1045px" width="11" height="11" viewBox="0 0 11 11"><rect x="0" y="0" width="11" height="11" fill="#afb1b3"/><path d="M2 3.500l2.500 2L2 7.500M5.500 8h3.500" stroke="#3d3e40" stroke-width="1.200" fill="none"/></svg>
<svg class="abs" style="left:706px;top:1045px" width="12" height="12" viewBox="0 0 12 12"><circle cx="6" cy="6" r="6" fill="#afb1b3"/><path d="M4.500 3.500L9 6 4.500 8.500z" fill="#3d3e40"/></svg>
<!-- status icons -->
<svg class="abs" style="left:9px;top:1065px" width="14" height="12" viewBox="0 0 14 12" fill="none" stroke="#afb1b3" stroke-width="1.300"><rect x="3.500" y=".700" width="9.800" height="8"/><path d="M.7 3.500v7.800h9.500"/></svg>
<svg class="abs" style="left:1898px;top:1064px" width="13" height="12" viewBox="0 0 13 12"><rect x="2" y="5" width="10" height="7" fill="#afb1b3"/><path d="M1 5V3.500a2.500 2.500 0 0 1 5 0V5" stroke="#afb1b3" stroke-width="1.400" fill="none"/></svg>
</div>
<!--/BOTTOM-->
<!--OVERLAY-->
<!-- breadcrumb band -->
<div class="abs" style="left:373px;top:638px;width:1529px;height:2px;background:#4b4d4e"></div>
<div class="abs" style="left:373px;top:640px;width:1529px;height:23px;background:#313335"></div>
<!-- warning widget -->
<svg class="abs" style="left:1832px;top:92px" width="11" height="11" viewBox="0 0 11 11"><path d="M5.500 0L11 11H0z" fill="#8f8a55"/><rect x="4.900" y="3.800" width="1.200" height="3.800" fill="#2b2b2b"/><rect x="4.900" y="8.400" width="1.200" height="1.200" fill="#2b2b2b"/></svg>
<svg class="abs" style="left:1865px;top:95px" width="9" height="6" viewBox="0 0 9 6" fill="none" stroke="#9a9c9d" stroke-width="1.600"><path d="M.5 5.200l4-4 4 4"/></svg>
<svg class="abs" style="left:1886px;top:95px" width="9" height="6" viewBox="0 0 9 6" fill="none" stroke="#9a9c9d" stroke-width="1.600"><path d="M.5.800l4 4 4-4"/></svg>
<!-- editor scrollbar thumb -->
<div class="abs" style="left:1893px;top:276px;width:8px;height:302px;background:#4f5152"></div>
<!-- console scrollbar thumb -->
<div class="abs" style="left:1893px;top:692px;width:8px;height:241px;background:#4f5152"></div>
<!-- fold marker line 11 -->
<svg class="abs" style="left:444px;top:127px" width="11" height="22" viewBox="0 0 11 22" fill="none" stroke="#55585a" stroke-width="1.200"><path d="M.600 21V6.500L5.500 1l4.900 5.500"/></svg>
<!-- tooltip -->
<div class="abs" style="left:207px;top:475px;width:650px;height:28px;background:#4b4d4e;border-radius:3px;z-index:20"></div>
<svg class="abs" style="left:527px;top:503px;z-index:20" width="10" height="5" viewBox="0 0 10 5"><path d="M0 0h10L5 5z" fill="#4b4d4e"/></svg>
<!-- mouse I-beam -->
<svg class="abs" style="left:1175px;top:335px;z-index:30" width="11" height="19" viewBox="0 0 11 19" fill="none"><path d="M1.500 1.500q3 0 4 1.500 1-1.500 4-1.500M5.500 3v13M1.500 17.500q3 0 4-1.500 1 1.500 4 1.500" stroke="#111" stroke-width="3"/><path d="M1.500 1.500q3 0 4 1.500 1-1.500 4-1.500M5.500 3v13M1.500 17.500q3 0 4-1.500 1 1.500 4 1.500" stroke="#f2f2f2" stroke-width="1.300"/></svg>
<!-- blue time bubble -->
<div class="abs" style="left:1833px;top:916px;width:53px;height:53px;border-radius:50%;background:radial-gradient(circle at 50% 55%,#9bdcff 0%,#7ccbfb 60%,#6cbcf5 100%);border:2.500px solid #f4fbff;z-index:30"></div>
<div class="abs" style="left:1850px;top:921px;width:20px;height:5px;border-radius:5px 5px 2px 2px;background:#3f8fe6;z-index:30"></div>
<!-- green meter -->
<div class="abs" style="left:1911px;top:976px;width:9px;height:61px;background:linear-gradient(#2b3a5c 0,#2b3a5c 10%,#2a9a68 18%,#30b56d 50%,#3ccb7c 100%);border:1.500px solid #2f8d86;border-right:none"></div>
<!--/OVERLAY-->
</body>
</html>
